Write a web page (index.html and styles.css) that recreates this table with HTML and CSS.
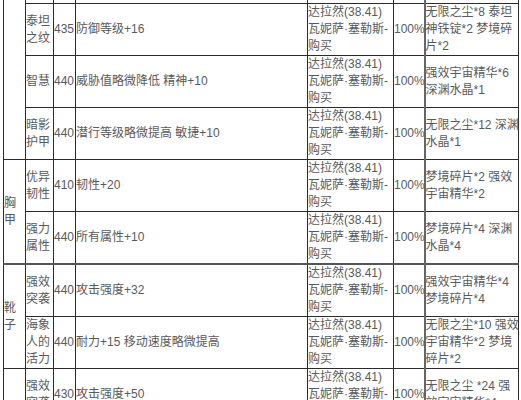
FILE: index.html
```html
<!DOCTYPE html>
<html lang="zh-CN">
<head>
<meta charset="utf-8">
<title>附魔列表</title>
<link rel="stylesheet" href="styles.css">
</head>
<body>
<table class="enchants">
  <colgroup>
    <col class="c-group">
    <col class="c-name">
    <col class="c-level">
    <col class="c-effect">
    <col class="c-source">
    <col class="c-rate">
    <col class="c-mats">
  </colgroup>
  <tbody>
    <tr>
      <td rowspan="4"></td>
      <td></td><td></td><td></td><td></td><td></td><td class="mats"></td>
    </tr>
    <tr>
      <td>泰坦<br>之纹</td>
      <td>435</td>
      <td>防御等级+16</td>
      <td>达拉然(38.41)<br>瓦妮萨·塞勒斯-<br>购买</td>
      <td>100%</td>
      <td class="mats">无限之尘*8 泰坦<br>神铁锭*2 梦境碎<br>片*2</td>
    </tr>
    <tr>
      <td>智慧</td>
      <td>440</td>
      <td>威胁值略微降低 精神+10</td>
      <td>达拉然(38.41)<br>瓦妮萨·塞勒斯-<br>购买</td>
      <td>100%</td>
      <td class="mats">强效宇宙精华*6<br>深渊水晶*1</td>
    </tr>
    <tr>
      <td>暗影<br>护甲</td>
      <td>440</td>
      <td>潜行等级略微提高 敏捷+10</td>
      <td>达拉然(38.41)<br>瓦妮萨·塞勒斯-<br>购买</td>
      <td>100%</td>
      <td class="mats">无限之尘*12 深渊<br>水晶*1</td>
    </tr>
    <tr>
      <td rowspan="2">胸<br>甲</td>
      <td>优异<br>韧性</td>
      <td>410</td>
      <td>韧性+20</td>
      <td>达拉然(38.41)<br>瓦妮萨·塞勒斯-<br>购买</td>
      <td>100%</td>
      <td class="mats">梦境碎片*2 强效<br>宇宙精华*2</td>
    </tr>
    <tr>
      <td>强力<br>属性</td>
      <td>440</td>
      <td>所有属性+10</td>
      <td>达拉然(38.41)<br>瓦妮萨·塞勒斯-<br>购买</td>
      <td>100%</td>
      <td class="mats">梦境碎片*4 深渊<br>水晶*4</td>
    </tr>
    <tr class="group-start">
      <td rowspan="2">靴<br>子</td>
      <td>强效<br>突袭</td>
      <td>440</td>
      <td>攻击强度+32</td>
      <td>达拉然(38.41)<br>瓦妮萨·塞勒斯-<br>购买</td>
      <td>100%</td>
      <td class="mats">强效宇宙精华*4<br>梦境碎片*4</td>
    </tr>
    <tr>
      <td>海象<br>人的<br>活力</td>
      <td>440</td>
      <td>耐力+15 移动速度略微提高</td>
      <td>达拉然(38.41)<br>瓦妮萨·塞勒斯-<br>购买</td>
      <td>100%</td>
      <td class="mats">无限之尘*10 强效<br>宇宙精华*2 梦境<br>碎片*2</td>
    </tr>
    <tr>
      <td></td>
      <td>强效<br>突袭</td>
      <td>430</td>
      <td>攻击强度+50</td>
      <td>达拉然(38.41)<br>瓦妮萨·塞勒斯-<br>购买</td>
      <td>100%</td>
      <td class="mats">无限之尘 *24 强<br>效宇宙精华*4</td>
    </tr>
  </tbody>
</table>
</body>
</html>
```
FILE: styles.css
```css
html, body {
  margin: 0;
  padding: 0;
  background: #ffffff;
}

.enchants {
  border-collapse: collapse;
  table-layout: fixed;
  width: 516px;
  margin: -49px 0 0 3px;
  font-family: "Liberation Sans", "Noto Sans CJK SC", sans-serif;
  font-size: 12px;
  line-height: 17px;
  color: #5a5a5a;
}

.c-group { width: 22px; }
.c-name { width: 28px; }
.c-level { width: 22px; }
.c-effect { width: 232px; }
.c-source { width: 86px; }
.c-rate { width: 31px; }
.c-mats { width: 94px; }

.enchants td {
  border: 1px solid #2b2b2b;
  padding: 0;
  height: 51px;
  vertical-align: middle;
  text-align: left;
  white-space: nowrap;
}

.enchants td.mats {
  border-left: 2px solid #666666;
}

.enchants tr.group-start td {
  border-top: 2px solid #555555;
}
```
